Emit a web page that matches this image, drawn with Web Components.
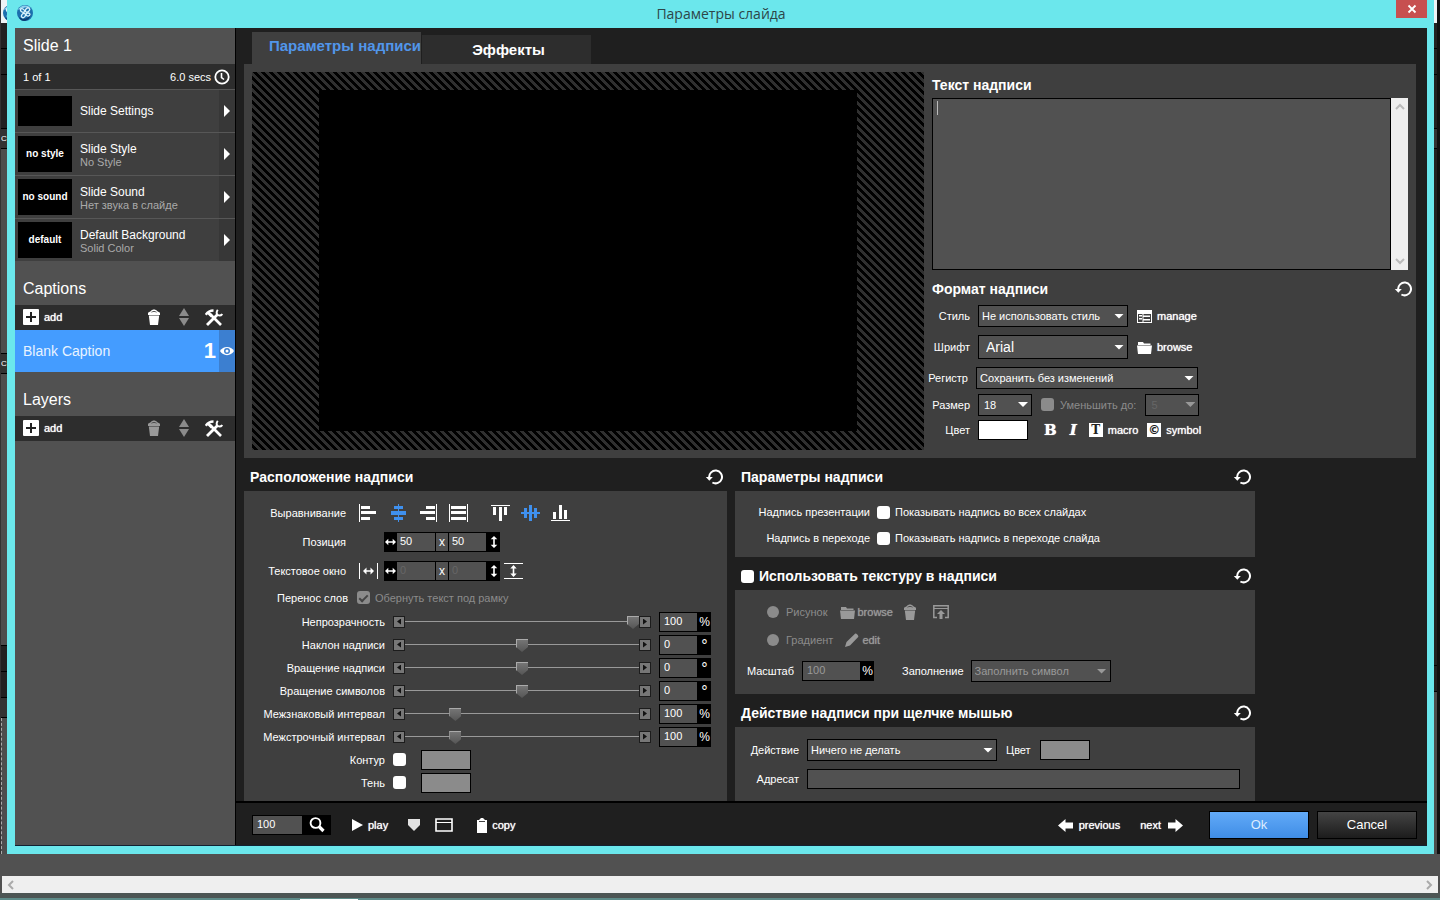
<!DOCTYPE html>
<html lang="ru">
<head>
<meta charset="utf-8">
<title>Параметры слайда</title>
<style>
    body {
        margin: 0;
        background: #515151;
        color: #fff;
        font: 11px/14px "Liberation Sans", Arial, sans-serif;
    }
</style>
</head>
<body>
<app-desktop>
    <app-dialog heading="Параметры слайда">
        <slide-sidebar slot="side"></slide-sidebar>
        <caption-tabs></caption-tabs>
        <caption-editor></caption-editor>
        <settings-grid>
            <position-panel></position-panel>
            <options-panel slot="second"></options-panel>
        </settings-grid>
        <dialog-footer slot="footer"></dialog-footer>
    </app-dialog>
</app-desktop>

<script>
const icons = {
    logo: [18, 18, '<circle cx="9" cy="9" r="8" fill="#1b6fae"/><path d="M2 6a8 8 0 0 1 13-2C11 2 6 4 2 6z" fill="#8fd0ee"/><path d="M3 13c4 3 9 2 12-3-1 5-4 7-7 7-2 0-4-1-5-4z" fill="#0b3f75"/><g fill="none" stroke="#d8f2fc" stroke-width="1.3"><ellipse cx="11.500" cy="6" rx="2.400" ry="1.800" transform="rotate(-45 11.500 6)"/><ellipse cx="6.500" cy="6.500" rx="2.200" ry="1.600" transform="rotate(35 6.500 6.500)"/><ellipse cx="12" cy="10.500" rx="2" ry="1.500"/><ellipse cx="7.500" cy="11.500" rx="2.400" ry="1.700" transform="rotate(-50 7.500 11.500)"/></g>'],
    close: [10, 10, '<path d="M1.500 1.500l7 7M8.500 1.500l-7 7" stroke="currentColor" stroke-width="1.800"/>'],
    clock: [16, 16, '<circle cx="8" cy="8" r="6.700" fill="none" stroke="currentColor" stroke-width="1.800"/><path d="M7.500 4v4.500l2.500 2" fill="none" stroke="currentColor" stroke-width="1.600"/>'],
    right: [6, 12, '<path d="M0 0l6 6-6 6z"/>'],
    plus: [16, 16, '<rect width="16" height="16" rx="1"/><path d="M8 3v10M3 8h10" stroke="#222" stroke-width="2"/>'],
    trash: [14, 16, '<path d="M4 2C5 0 9 0 10 2l3 1.800V6H1V3.800z"/><path d="M4.500 3.200c1.500-1 3.500-1 5 0" stroke="#444" fill="none" stroke-width=".9"/><path d="M1.800 6.600h10.400L11 16H3z"/>'],
    sort: [10, 18, '<path d="M5 0l5 8H0zM5 18l5-8H0z" fill="#8b8b8b"/>'],
    tools: [18, 17, '<g fill="none" stroke="currentColor"><path d="M5 5l11 11" stroke-width="2.600"/><path d="M2 16L12.500 5.500" stroke-width="2.800"/><path d="M.8 5.800C2.500 3 5 1.500 8.500 1.500" stroke-width="2.400"/><path d="M3 3.500l4 4" stroke-width="3"/><path d="M12.800.8c-1.800 2.200-1.300 4.600.3 5.400 1.500.7 3 .3 4.200-1.200" stroke-width="2"/></g>'],
    eye: [14, 10, '<path d="M0 5C3-.5 11-.5 14 5 11 10.500 3 10.500 0 5z"/><circle cx="7" cy="5" r="3" fill="#3c7fd0"/><circle cx="7" cy="5" r="1.500"/>'],
    table: [15, 13, '<path d="M0 0h15v13H0z"/><path d="M1 4h13v8H1z" fill="#3f3f3f"/><path d="M2 5h3v1.500H2zM2 8h3v1.500H2zM6.500 5.500H13V7H6.500zM6.500 9H13v1.500H6.500zM5.500 4h1v8h-1z"/>'],
    folder: [15, 13, '<path d="M1 1h5l1 1.500h6.500V4H1z"/><path d="M0 4.600h15L14 13H1z"/>'],
    open: [16, 14, '<path d="M4 12.500H.8V.8h14.400v11.700H12" fill="none" stroke="currentColor" stroke-width="1.500"/><path d="M1 3.500h14" stroke="currentColor"/><path d="M8 5l4 4H9.500v5h-3V9H4z"/>'],
    pencil: [14, 14, '<path d="M0 14l1.500-5L10 .8c1-1 4 2 3.200 3.200L5 12.500z"/>'],
    undo: [18, 16, '<path d="M4.200 8.500a6.400 6.400 0 1 1 3.200 5" fill="none" stroke="currentColor" stroke-width="2"/><path d="M.8 8h7L4.300 11.800z"/>'],
    left: [20, 20, '<path d="M1 1h1v18H1zM3 3h9v3H3zM3 8h15v3H3zM3 14h9v3H3z"/>'],
    center: [20, 20, '<path d="M10 1h1v18h-1zM6 3h9v3H6zM3 8h15v4H3zM6 14h9v3H6z"/>'],
    rightAlign: [20, 20, '<path d="M18 1h1v18h-1zM8 3h9v3H8zM2 8h15v3H2zM8 14h9v3H8z"/>'],
    justify: [20, 20, '<path d="M1 1h1v18H1zM19 1h1v18h-1zM3 3h15v3H3zM3 8h15v3H3zM3 14h15v3H3z"/>'],
    top: [20, 20, '<path d="M1 2h19v1H1zM3 4h3v8H3zM9 4h3v14H9zM14 4h3v8h-3z"/>'],
    middle: [20, 20, '<path d="M1 9h19v2H1zM4 5h3v10H4zM9 2h3v16H9zM14 5h3v10h-3z"/>'],
    bottom: [20, 20, '<path d="M1 17h19v1H1zM3 9h3v7H3zM9 2h3v14H9zM14 7h3v9h-3z"/>'],
    horizontal: [11, 8, '<path d="M0 4l3.300-3.300v2.500h4.400V.7L11 4 7.700 7.300V4.800H3.300v2.500z"/>'],
    vertical: [8, 12, '<path d="M4 0l3.300 3.300H4.800v5.400h2.500L4 12 .7 8.700h2.500V3.300H.7z"/>'],
    fitWidth: [20, 18, '<path d="M1 1h1v16H1zM19 1h1v16h-1zM5 9l3.500-3.500v2.700h4V5.500L16 9l-3.500 3.500V9.800h-4v2.700z"/>'],
    fitHeight: [20, 18, '<path d="M0 1h19v1H0zM0 16h19v1H0zM9.500 3l3.200 3.500h-2.400v5h2.400L9.500 15l-3.200-3.500h2.400v-5H6.300z"/>'],
    search: [16, 16, '<circle cx="6.500" cy="6" r="4.900" fill="none" stroke="currentColor" stroke-width="1.900"/><path d="M10 9.500l4.500 4.500" stroke="currentColor" stroke-width="3.200"/>'],
    play: [12, 14, '<path d="M1 1l11 6-11 6z"/>'],
    marker: [14, 14, '<path d="M1 1h12v6l-6 6-6-6z" fill="#e2e2e2"/>'],
    window: [18, 14, '<path d="M1 1h16v12H1z" fill="none" stroke="currentColor" stroke-width="1.600"/><path d="M1 4.500h16" stroke="currentColor"/>'],
    clipboard: [10, 15, '<path d="M0 2h2l2-2h2l2 2h2v13H0z"/><path d="M2 3.500h6" stroke="#444"/>'],
    arrowLeft: [15, 13, '<path d="M0 6.500L7.500 0v3.500H15v6H7.500V13z"/>'],
    arrowRight: [15, 13, '<path d="M15 6.500L7.500 0v3.500H0v6h7.500V13z"/>'],
    chevronUp: [10, 7, '<path d="M1 6l4-4 4 4" fill="none" stroke="currentColor" stroke-width="2"/>'],
    chevronDown: [10, 7, '<path d="M1 1l4 4 4-4" fill="none" stroke="currentColor" stroke-width="2"/>'],
    chevronLeft: [7, 10, '<path d="M6 1L2 5l4 4" fill="none" stroke="currentColor" stroke-width="2"/>'],
    chevronRight: [7, 10, '<path d="M1 1l4 4-4 4" fill="none" stroke="currentColor" stroke-width="2"/>']
};

// form controls shared by every panel
const controls = `
    * { box-sizing: border-box; }
    button {
        display: inline-flex;
        align-items: center;
        gap: 5px;
        padding: 0;
        border: 0;
        background: none;
        color: inherit;
        font: inherit;
        text-shadow: 0 0 1px currentColor;
    }
    button:disabled { color: #999; }
    input, select, textarea {
        margin: 0;
        border: 1px solid #000;
        border-radius: 0;
        outline: 0;
        background: #515151;
        color: #fff;
        font: inherit;
    }
    input[type=text] {
        min-width: 0;
        height: 20px;
        padding: 0 4px 2px;
    }
    input[type=text]:disabled { color: #666; }
    input[type=checkbox], input[type=radio] {
        appearance: none;
        flex: none;
        width: 13px;
        height: 13px;
        border: 0;
        border-radius: 3px;
        background: #fff;
    }
    input[type=radio] {
        width: 12px;
        height: 12px;
        border-radius: 50%;
    }
    input[type=checkbox]:disabled, input[type=radio]:disabled { background: #8b8b8b; }
    input[type=checkbox]:checked {
        display: grid;
        place-items: center;
    }
    input[type=checkbox]:checked::after {
        content: "";
        width: 7px;
        height: 3px;
        border: solid #444;
        border-width: 0 0 2px 2px;
        transform: rotate(-45deg);
    }
    .select {
        display: inline-grid;
        align-items: center;
    }
    .select select {
        grid-area: 1 / 1;
        appearance: none;
        width: 100%;
        height: 22px;
        padding: 0 16px 0 3px;
    }
    .select::after {
        content: "";
        grid-area: 1 / 1;
        justify-self: end;
        width: 10px;
        height: 5px;
        margin-right: 4px;
        background: #fff;
        clip-path: polygon(0 0, 100% 0, 50% 100%);
        pointer-events: none;
    }
    .select select:disabled { color: #999; opacity: 1; }
    .select.off::after { background: #999; }
    .swatch {
        width: 50px;
        height: 20px;
        border: 1px solid #000;
        background: #8b8b8b;
    }
    .dim { color: #8b8b8b; }
    .unit {
        display: flex;
    }
    .unit span {
        width: 13px;
        height: 20px;
        background: #000;
        font-size: 12px;
        line-height: 20px;
        text-align: center;
    }
`;

class UiIcon extends HTMLElement {
    connectedCallback() {
        const [w, h, body] = icons[this.getAttribute('name')];
        const shadowRoot = this.attachShadow({mode: 'open'});
        shadowRoot.innerHTML = `
            <style>
                :host { display: inline-flex; flex: none; }
                svg { display: block; fill: currentColor; }
            </style>
            <svg width="${w}" height="${h}" viewBox="0 0 ${w} ${h}" aria-hidden="true">${body}</svg>
        `;
    }
}
customElements.define('ui-icon', UiIcon);

function define(name, html) {
    const template = document.createElement('template');
    template.innerHTML = html;
    customElements.define(name, class extends HTMLElement {
        connectedCallback() {
            const shadowRoot = this.attachShadow({mode: 'open'});
            shadowRoot.appendChild(template.content.cloneNode(true));
            shadowRoot.querySelectorAll('[data-text]').forEach(el => {
                el.textContent = this.getAttribute(el.dataset.text);
            });
        }
    });
}

define('app-desktop', `
    <style>
        * { box-sizing: border-box; }
        :host {
            display: grid;
            grid-template-columns: 7px minmax(0, 1fr) 6px;
            grid-template-rows: 1fr 22px 17px 7px;
            min-height: 100vh;
        }
        .edge {
            display: flex;
            flex-direction: column;
            overflow: hidden;
            border-left: 1px solid #333;
            background: #4d4d4d;
        }
        .edge div { border-bottom: 1px solid #000; background: #222; }
        .edge .white { height: 23px; padding: 4px 0 0 1px; background: #eef3f5; border: 0; }
        .edge .bar { height: 26px; }
        .edge .tall { height: 54px; }
        .edge .head { height: 20px; font-size: 8px; line-height: 20px; background: #333; }
        .edge .body { height: 205px; background: #4d4d4d; }
        .edge .last { height: 272px; background: #4d4d4d; }
        .edge .dash { flex: 1; border: 0; border-left: 1px dashed #aaa; background: #4d4d4d; }
        .right { border-left: 0; border-right: 3px solid #111; }
        .edge .long { height: 517px; }
        .scroll {
            grid-column: 1 / -1;
            grid-row: 3;
            display: flex;
            justify-content: space-between;
            align-items: center;
            margin: 0 2px;
            padding: 0 5px;
            background: #efefef;
            color: #aaa;
        }
        .task {
            grid-column: 1 / -1;
            grid-row: 4;
            border-bottom: 2px solid #5d8b89;
            background: #4c5554;
        }
        .task div { width: 58px; height: 7px; margin-left: 300px; border-bottom: 1px solid #fff; }
    </style>
    <div class="edge">
        <div class="white"><ui-icon name="logo"></ui-icon></div><div class="bar"></div><div class="bar"></div><div class="tall"></div>
        <div class="head">C</div><div class="body"></div>
        <div class="head">C</div><div class="last"></div>
        <div class="bar"></div><div class="bar"></div><div class="head"></div><div class="dash"></div>
    </div>
    <slot></slot>
    <div class="edge right">
        <div class="white"></div><div class="bar"></div><div class="bar"></div><div class="tall"></div>
        <div class="head"></div><div class="long"></div><div class="bar"></div>
    </div>
    <div class="scroll"><ui-icon name="chevronLeft"></ui-icon><ui-icon name="chevronRight"></ui-icon></div>
    <div class="task"><div></div></div>
`);

define('app-dialog', `
    <style>
        ${controls}
        :host {
            display: flex;
            flex-direction: column;
            padding: 0 7px 8px 8px;
            background: #6be7ec;
        }
        header {
            display: grid;
            grid-template-columns: 1fr auto 1fr;
            align-items: center;
            height: 28px;
        }
        header ui-icon { margin: 0 0 2px 1px; }
        h1 {
            margin: 0;
            color: #2d4648;
            font: 14px/24px "Open Sans", "Noto Sans", sans-serif;
        }
        header button {
            justify-self: end;
            align-self: start;
            justify-content: center;
            width: 31px;
            height: 18px;
            background: #c75050;
        }
        header button ui-icon { margin: 0; }
        .content {
            flex: 1;
            display: grid;
            grid-template-columns: 221px minmax(0, 1fr);
            border-bottom: 1px solid #123;
        }
        main {
            display: flex;
            flex-direction: column;
            min-width: 0;
            background: #1f1f1f;
        }
        .scroller {
            flex: 1;
            display: flex;
            flex-direction: column;
            padding: 4px 11px 0 8px;
        }
    </style>
    <header>
        <ui-icon name="logo"></ui-icon>
        <h1 data-text="heading"></h1>
        <button aria-label="Закрыть"><ui-icon name="close"></ui-icon></button>
    </header>
    <div class="content">
        <slot name="side"></slot>
        <main>
            <div class="scroller"><slot></slot></div>
            <slot name="footer"></slot>
        </main>
    </div>
`);

define('side-item', `
    <style>
        ${controls}
        :host { display: block; border-top: 1px solid #575757; }
        button {
            display: grid;
            grid-template-columns: 54px 1fr 16px;
            gap: 0 8px;
            width: 100%;
            height: 42px;
            padding-left: 3px;
            background: #3f3f3f;
            text-align: left;
            text-shadow: none;
        }
        .thumb {
            display: grid;
            place-items: center;
            height: 36px;
            background: #000;
            font: bold 10px/12px "Liberation Sans", Arial, sans-serif;
        }
        :host([small]) .thumb { height: 30px; }
        .name { font-size: 12px; }
        .note { color: #aaa; line-height: 13px; }
        .note:empty { display: none; }
        .name, .note { display: block; }
        .text { padding-top: 2px; }
        :host([small]) .text { padding-top: 0; }
        .arrow {
            display: grid;
            place-items: center;
            height: 42px;
            background: #373737;
        }
    </style>
    <button>
        <span class="thumb" data-text="thumb"></span>
        <span class="text"><span class="name" data-text="name"></span><span class="note" data-text="note"></span></span>
        <span class="arrow"><ui-icon name="right"></ui-icon></span>
    </button>
`);

define('side-tools', `
    <style>
        ${controls}
        :host {
            display: flex;
            align-items: center;
            height: 25px;
            padding: 0 12px 1px 8px;
            background: #2d2d2d;
        }
        .add { margin-right: auto; }
        .sort { margin: 0 16px 0 18px; }
    </style>
    <button class="add"><ui-icon name="plus"></ui-icon>add</button>
    <slot></slot>
    <button class="sort" aria-label="Порядок"><ui-icon name="sort"></ui-icon></button>
    <button aria-label="Настройки"><ui-icon name="tools"></ui-icon></button>
`);

define('slide-sidebar', `
    <style>
        ${controls}
        :host {
            display: block;
            border-right: 1px solid #000;
            background: #515151;
        }
        h2 {
            margin: 0;
            padding-left: 8px;
            font-size: 16px;
            font-weight: normal;
            line-height: 36px;
        }
        h2.gap { padding-top: 12px; line-height: 32px; }
        .info {
            display: flex;
            align-items: center;
            gap: 3px;
            height: 25px;
            padding: 0 5px 0 8px;
            background: #2d2d2d;
        }
        .info span:first-child { margin-right: auto; }
        .caption {
            display: flex;
            align-items: center;
            height: 42px;
            padding-left: 8px;
            background: #449cff;
            color: #e8f3ff;
            font-size: 14px;
        }
        .caption b { margin-left: auto; padding-right: 3px; font-size: 22px; color: #fff; }
        .caption button { width: 16px; height: 42px; justify-content: center; background: #3c7fd0; color: #fff; }
    </style>
    <h2>Slide 1</h2>
    <div class="info"><span>1 of 1</span><span>6.0 secs</span><ui-icon name="clock"></ui-icon></div>
    <side-item small thumb="" name="Slide Settings" note=""></side-item>
    <side-item thumb="no style" name="Slide Style" note="No Style"></side-item>
    <side-item thumb="no sound" name="Slide Sound" note="Нет звука в слайде"></side-item>
    <side-item thumb="default" name="Default Background" note="Solid Color"></side-item>
    <h2 class="gap">Captions</h2>
    <side-tools><button aria-label="Удалить"><ui-icon name="trash"></ui-icon></button></side-tools>
    <div class="caption"><span>Blank Caption</span><b>1</b><button aria-label="Видимость"><ui-icon name="eye"></ui-icon></button></div>
    <h2 class="gap">Layers</h2>
    <side-tools><button disabled aria-label="Удалить"><ui-icon name="trash"></ui-icon></button></side-tools>
`);

define('caption-tabs', `
    <style>
        ${controls}
        :host {
            display: flex;
            align-items: flex-end;
            gap: 1px;
            height: 32px;
            padding-left: 8px;
        }
        button {
            justify-content: center;
            width: 169px;
            height: 29px;
            padding-left: 4px;
            background: #2d2d2d;
            font-size: 15px;
            font-weight: bold;
            text-shadow: none;
            white-space: nowrap;
        }
        button.on {
            justify-content: flex-end;
            height: 32px;
            padding-bottom: 4px;
            background: #3f3f3f;
            color: #5196ea;
        }
    </style>
    <button class="on">Параметры надписи</button>
    <button>Эффекты</button>
`);

define('caption-editor', `
    <style>
        ${controls}
        :host {
            display: grid;
            grid-template-columns: minmax(0, 1fr) 476px;
            gap: 8px;
            padding: 8px;
            background: #3f3f3f;
        }
        .stage {
            display: grid;
            padding: 18px 10% 19px;
            background: linear-gradient(45deg, #000 25%, #303030 25% 50%, #000 50% 75%, #303030 75%) 0 0 / 8px 8px;
        }
        .screen { background: #000; }
        .side { padding-bottom: 8px; }
        h3 {
            display: flex;
            justify-content: space-between;
            align-items: center;
            margin: 0;
            font-size: 14px;
            line-height: 26px;
        }
        h3 button { margin-right: -4px; }
        .text { display: flex; height: 172px; margin-bottom: 6px; }
        textarea {
            flex: 1;
            resize: none;
            background: #515151 linear-gradient(#bbb, #bbb) 4px 2px / 1px 14px no-repeat;
        }
        .bar {
            display: flex;
            flex-direction: column;
            align-items: center;
            justify-content: space-between;
            width: 17px;
            padding: 5px 0;
            background: #efefef;
            color: #bbb;
        }
        .row { display: flex; align-items: center; height: 25px; }
        .row.tall { height: 34px; }
        .row.mid { height: 28px; }
        .name { flex: none; width: 38px; margin-right: 8px; text-align: right; white-space: nowrap; }
        .wide { width: 150px; }
        .font select { height: 24px; padding-left: 7px; font-size: 14px; }
        .case { width: 222px; }
        .case-name { margin-left: -4px; width: 40px; }
        .size { width: 54px; }
        .size select { padding-left: 5px; }
        .small-size select:disabled { color: #666; }
        .row button { margin-left: 9px; }
        .row .white { margin-left: 0; background: #fff; }
        .reduce { display: flex; align-items: center; gap: 6px; margin: 0 9px; }
        .row .serif { margin-left: 13px; font: bold 15px/14px "DejaVu Serif", serif; }
        .row .white + .serif { margin-left: 16px; }
        .row .macro { margin-left: 12px; }
        .tile {
            width: 14px;
            height: 14px;
            background: #fff;
            color: #222;
            font: bold 12px/14px "DejaVu Serif", serif;
            text-shadow: none;
            text-align: center;
        }
        .symbol .tile { font: bold 12px/14px "DejaVu Sans", sans-serif; }
    </style>
    <div class="stage"><div class="screen"></div></div>
    <div class="side">
        <h3><label for="text">Текст надписи</label></h3>
        <div class="text">
            <textarea id="text"></textarea>
            <div class="bar"><ui-icon name="chevronUp"></ui-icon><ui-icon name="chevronDown"></ui-icon></div>
        </div>
        <h3>Формат надписи<button aria-label="Сбросить"><ui-icon name="undo"></ui-icon></button></h3>
        <div class="row mid">
            <label class="name" for="style">Стиль</label>
            <span class="select wide"><select id="style"><option>Не использовать стиль</option></select></span>
            <button><ui-icon name="table"></ui-icon>manage</button>
        </div>
        <div class="row tall">
            <label class="name" for="font">Шрифт</label>
            <span class="select wide font"><select id="font"><option>Arial</option></select></span>
            <button><ui-icon name="folder"></ui-icon>browse</button>
        </div>
        <div class="row mid">
            <label class="name case-name" for="case">Регистр</label>
            <span class="select case"><select id="case"><option>Сохранить без изменений</option></select></span>
        </div>
        <div class="row">
            <label class="name" for="size">Размер</label>
            <span class="select size"><select id="size"><option>18</option></select></span>
            <label class="reduce dim"><input type="checkbox" disabled>Уменьшить до:</label>
            <span class="select size small-size off"><select disabled aria-label="Уменьшить до"><option>5</option></select></span>
        </div>
        <div class="row">
            <label class="name" for="color">Цвет</label>
            <button id="color" class="swatch white" aria-label="Цвет"></button>
            <button class="serif">B</button>
            <button class="serif"><i>I</i></button>
            <button class="macro"><span class="tile">T</span>macro</button>
            <button class="symbol"><span class="tile">©</span>symbol</button>
        </div>
    </div>
`);

define('settings-grid', `
    <style>
        :host {
            flex: 1;
            display: grid;
            grid-template-columns: minmax(0, 483px) minmax(0, 520px);
            gap: 8px;
        }
    </style>
    <slot></slot>
    <slot name="second"></slot>
`);

define('setting-group', `
    <style>
        ${controls}
        :host { display: flex; flex-direction: column; }
        :host([grow]) { flex: 1; }
        header {
            display: flex;
            justify-content: space-between;
            align-items: center;
            height: 33px;
            padding: 5px 4px 0 6px;
        }
        ::slotted(*) { font-size: 14px; font-weight: bold; }
        .body {
            flex: 1;
            padding: var(--group-top, 8px) 0 6px;
            background: #3f3f3f;
        }
        .body ::slotted(*) { font-size: 11px; font-weight: normal; }
    </style>
    <header><slot name="title"></slot><button aria-label="Сбросить"><ui-icon name="undo"></ui-icon></button></header>
    <div class="body"><slot></slot></div>
`);

// label, arrow buttons, range and a number with its unit
class SliderRow extends HTMLElement {
    connectedCallback() {
        const value = this.getAttribute('value');
        const label = this.getAttribute('label');
        const shadowRoot = this.attachShadow({mode: 'open'});
        shadowRoot.innerHTML = `
            <style>
                ${controls}
                :host { display: flex; align-items: center; height: 23px; }
                label { flex: none; width: 141px; margin-right: 8px; text-align: right; white-space: nowrap; }
                button {
                    justify-content: center;
                    flex: none;
                    width: 12px;
                    height: 12px;
                    border: 1px solid #1c1c1c;
                    background: #777;
                    color: #111;
                }
                button::before {
                    content: "";
                    width: 4px;
                    height: 6px;
                    background: #111;
                    clip-path: polygon(100% 0, 0 50%, 100% 100%);
                }
                button + input + button::before { clip-path: polygon(0 0, 100% 50%, 0 100%); }
                input[type=range] {
                    appearance: none;
                    flex: 1;
                    min-width: 0;
                    height: 15px;
                    border: 0;
                    background: linear-gradient(#999, #999) 0 50% / 100% 1px no-repeat;
                }
                input[type=range]::-webkit-slider-thumb {
                    appearance: none;
                    width: 12px;
                    height: 15px;
                    background: linear-gradient(90deg, #aaa 1px, transparent 1px), linear-gradient(#aaa 3px, #757575 3px, #555);
                    clip-path: polygon(0 2px, 100% 2px, 100% 10px, 50% 100%, 0 10px);
                }
                .unit { flex: none; margin: 0 16px 0 8px; }
                .unit input { width: 39px; }
                .unit .ring { font-size: 16px; line-height: 21px; }
            </style>
            <label for="range">${label}</label>
            <button aria-label="Меньше"></button>
            <input id="range" type="range" min="${this.getAttribute('min')}" max="${this.getAttribute('max')}" value="${value}">
            <button aria-label="Больше"></button>
            <div class="unit"><input type="text" value="${value}" aria-label="${label}"><span class="${this.hasAttribute('angle') ? 'ring' : ''}">${this.hasAttribute('angle') ? '°' : '%'}</span></div>
        `;
    }
}
customElements.define('slider-row', SliderRow);

define('position-panel', `
    <style>
        ${controls}
        :host { display: grid; --group-top: 7px; }
        .row { display: flex; align-items: center; height: 29px; }
        .row > .name { flex: none; width: 102px; margin-right: 12px; text-align: right; white-space: nowrap; }
        .aligns { display: flex; gap: 10px; }
        .aligns .next { margin-left: 12px; }
        .on { color: #3f90ee; }
        .pair {
            display: flex;
            align-items: center;
            height: 20px;
            margin: 0 4px 0 6px;
            background: #000;
        }
        .pair.alone { margin-left: 26px; }
        .pair span { display: grid; place-items: center; width: 13px; height: 18px; }
        .pair .x { background: #515151; width: 12px; font-size: 12px; }
        .pair input[type=text] { width: 39px; padding-left: 3px; border-left: 0; }
        .pair .x + input[type=text] { border-left: 1px solid #000; }
        .row.wrap { height: 25px; }
        .wrap > .name { width: 104px; margin-right: 9px; }
        .wrap label { display: flex; align-items: center; gap: 5px; }
        .row.small { height: 23px; }
        .small > .name { width: 141px; margin-right: 8px; }
        .small button { margin-left: 15px; }
    </style>
    <setting-group>
        <span slot="title">Расположение надписи</span>
        <div class="row">
            <span class="name">Выравнивание</span>
            <div class="aligns">
                <button aria-label="Влево"><ui-icon name="left"></ui-icon></button>
                <button class="on" aria-label="По центру"><ui-icon name="center"></ui-icon></button>
                <button aria-label="Вправо"><ui-icon name="rightAlign"></ui-icon></button>
                <button aria-label="По ширине"><ui-icon name="justify"></ui-icon></button>
                <button class="next" aria-label="Вверх"><ui-icon name="top"></ui-icon></button>
                <button class="on" aria-label="Посередине"><ui-icon name="middle"></ui-icon></button>
                <button aria-label="Вниз"><ui-icon name="bottom"></ui-icon></button>
            </div>
        </div>
        <div class="row">
            <label class="name" for="x">Позиция</label>
            <div class="pair alone">
                <span><ui-icon name="horizontal"></ui-icon></span><input id="x" type="text" value="50">
                <span class="x">x</span><input type="text" value="50" aria-label="Позиция Y">
                <span><ui-icon name="vertical"></ui-icon></span>
            </div>
        </div>
        <div class="row">
            <label class="name" for="w">Текстовое окно</label>
            <button aria-label="По ширине окна"><ui-icon name="fitWidth"></ui-icon></button>
            <div class="pair">
                <span><ui-icon name="horizontal"></ui-icon></span><input id="w" type="text" value="0" disabled>
                <span class="x">x</span><input type="text" value="0" disabled aria-label="Высота окна">
                <span><ui-icon name="vertical"></ui-icon></span>
            </div>
            <button aria-label="По высоте окна"><ui-icon name="fitHeight"></ui-icon></button>
        </div>
        <div class="row wrap">
            <span class="name">Перенос слов</span>
            <label class="dim"><input type="checkbox" checked disabled>Обернуть текст под рамку</label>
        </div>
        <slider-row label="Непрозрачность" min="0" max="100" value="100"></slider-row>
        <slider-row label="Наклон надписи" min="-90" max="90" value="0" angle></slider-row>
        <slider-row label="Вращение надписи" min="-180" max="180" value="0" angle></slider-row>
        <slider-row label="Вращение символов" min="-180" max="180" value="0" angle></slider-row>
        <slider-row label="Межзнаковый интервал" min="0" max="500" value="100"></slider-row>
        <slider-row label="Межстрочный интервал" min="0" max="500" value="100"></slider-row>
        <div class="row small">
            <label class="name" for="outline">Контур</label><input id="outline" type="checkbox">
            <button class="swatch" aria-label="Цвет контура"></button>
        </div>
        <div class="row small">
            <label class="name" for="shadow">Тень</label><input id="shadow" type="checkbox">
            <button class="swatch" aria-label="Цвет тени"></button>
        </div>
    </setting-group>
`);

define('options-panel', `
    <style>
        ${controls}
        :host { display: flex; flex-direction: column; }
        .row { display: flex; align-items: center; height: 26px; }
        .row > .name { flex: none; width: 135px; margin-right: 7px; text-align: right; }
        label { display: flex; align-items: center; justify-content: flex-end; gap: 5px; white-space: nowrap; }
        .row.pick { height: 28px; padding-left: 32px; }
        .pick label { gap: 7px; }
        .pick button { margin-left: 12px; gap: 3px; }
        .pick button + button { margin-left: 10px; }
        .pick .open.open { margin-left: 16px; }
        .row.scale { height: 34px; }
        .row > .first { width: 59px; margin-right: 8px; }
        .scale .unit input { width: 59px; padding-left: 4px; color: #999; }
        .fill { margin: 0 7px 0 28px; }
        .fill + .select { width: 140px; }
        .row.act { height: 30px; }
        .row > .act-name { width: 64px; margin-right: 8px; }
        .act .select { width: 190px; }
        .act .color { margin: 0 9px; }
        .act input { flex: 1; margin-right: 15px; }
        .act.low { height: 28px; }
    </style>
    <setting-group>
        <span slot="title">Параметры надписи</span>
        <div class="row">
            <span class="name">Надпись презентации</span>
            <label><input type="checkbox">Показывать надпись во всех слайдах</label>
        </div>
        <div class="row">
            <span class="name">Надпись в переходе</span>
            <label><input type="checkbox">Показывать надпись в переходе слайда</label>
        </div>
    </setting-group>
    <setting-group>
        <label slot="title"><input type="checkbox">Использовать текстуру в надписи</label>
        <div class="row pick dim">
            <label><input type="radio" name="kind" disabled>Рисунок</label>
            <button disabled><ui-icon name="folder"></ui-icon>browse</button>
            <button disabled aria-label="Удалить"><ui-icon name="trash"></ui-icon></button>
            <button class="open" disabled aria-label="Открыть"><ui-icon name="open"></ui-icon></button>
        </div>
        <div class="row pick dim">
            <label><input type="radio" name="kind" disabled>Градиент</label>
            <button disabled><ui-icon name="pencil"></ui-icon>edit</button>
        </div>
        <div class="row scale">
            <label class="name first" for="scale">Масштаб</label>
            <div class="unit"><input id="scale" type="text" value="100" disabled><span>%</span></div>
            <label class="fill" for="fill">Заполнение</label>
            <span class="select off"><select id="fill" disabled><option>Заполнить символ</option></select></span>
        </div>
    </setting-group>
    <setting-group grow>
        <span slot="title">Действие надписи при щелчке мышью</span>
        <div class="row act">
            <label class="name act-name" for="action">Действие</label>
            <span class="select"><select id="action"><option>Ничего не делать</option></select></span>
            <label class="color" for="color">Цвет</label>
            <button id="color" class="swatch" aria-label="Цвет"></button>
        </div>
        <div class="row act low">
            <label class="name act-name" for="target">Адресат</label>
            <input id="target" type="text">
        </div>
    </setting-group>
`);

define('dialog-footer', `
    <style>
        ${controls}
        :host {
            display: flex;
            align-items: center;
            height: 40px;
            padding: 2px 10px 0 16px;
            border-top: 2px solid #000;
        }
        input[type=text] { width: 50px; border-right: 0; }
        .search { justify-content: center; width: 29px; height: 20px; margin-right: 20px; background: #000; }
        .icon { margin-left: 19px; }
        .window { margin: 0 24px 0 14px; }
        .prev { margin-left: auto; gap: 6px; }
        .next { margin: 0 26px 0 20px; gap: 7px; }
        .big {
            justify-content: center;
            width: 100px;
            height: 28px;
            border: 1px solid #000;
            background: linear-gradient(#444, #1c1c1c);
            font-size: 13px;
            text-shadow: none;
        }
        .ok { margin-right: 8px; background: linear-gradient(#62aaf8, #3f8de6); color: #dcecff; }
    </style>
    <input type="text" value="100" aria-label="Масштаб">
    <button class="search" aria-label="Масштаб"><ui-icon name="search"></ui-icon></button>
    <button><ui-icon name="play"></ui-icon>play</button>
    <button class="icon" aria-label="Маркер"><ui-icon name="marker"></ui-icon></button>
    <button class="window" aria-label="Окно"><ui-icon name="window"></ui-icon></button>
    <button><ui-icon name="clipboard"></ui-icon>copy</button>
    <button class="prev"><ui-icon name="arrowLeft"></ui-icon>previous</button>
    <button class="next">next<ui-icon name="arrowRight"></ui-icon></button>
    <button class="big ok">Ok</button>
    <button class="big">Cancel</button>
`);
</script>
</body>
</html>
